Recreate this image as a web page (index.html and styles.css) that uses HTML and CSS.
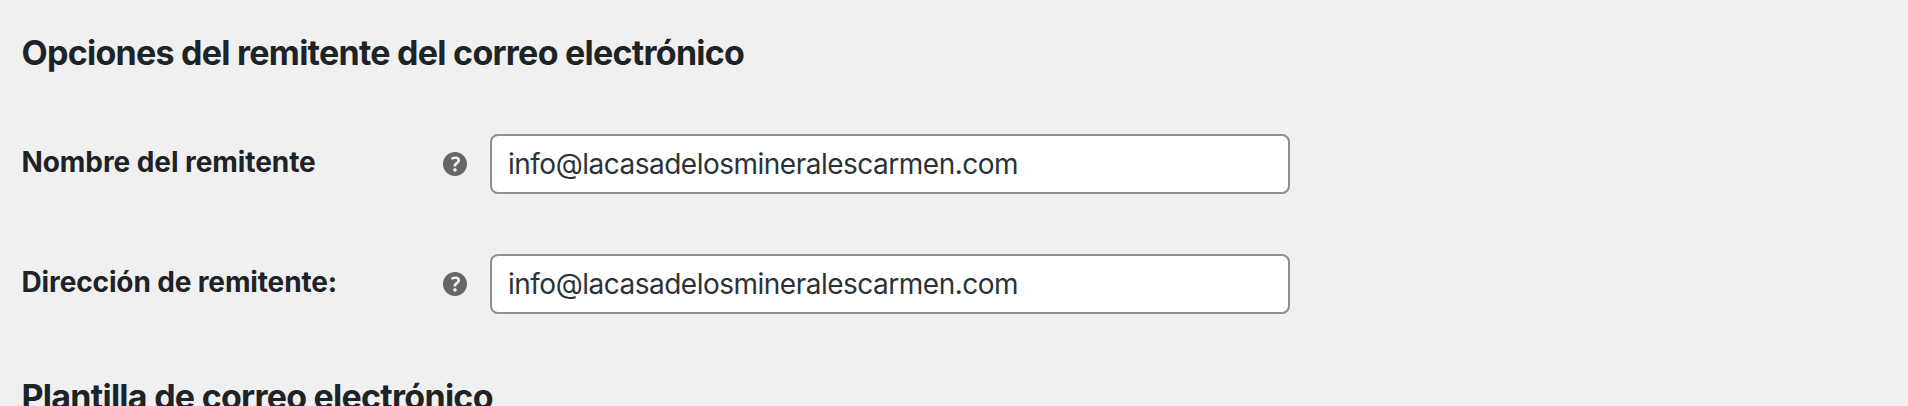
FILE: index.html
```html
<!DOCTYPE html>
<html lang="es">
<head>
<meta charset="utf-8">
<title>Opciones de correo electrónico</title>
<link rel="stylesheet" href="styles.css">
</head>
<body>
<main class="settings">
<h2 class="title">Opciones del remitente del correo electrónico</h2>
<div class="row">
<label class="label label-name" for="name">Nombre del remitente</label>
<svg class="help" viewBox="3 3 14 14"><path fill="#666" d="M17 10c0-3.87-3.14-7-7-7-3.87 0-7 3.13-7 7s3.13 7 7 7c3.86 0 7-3.13 7-7zm-6.3 1.48H9.14v-.43c0-.38.08-.7.24-.98s.46-.57.88-.89c.41-.29.68-.53.81-.71.14-.18.2-.39.2-.62 0-.25-.09-.44-.28-.58-.19-.13-.45-.19-.79-.19-.58 0-1.25.19-2 .57l-.64-1.28c.87-.49 1.8-.74 2.77-.74.81 0 1.45.2 1.92.58.48.39.71.91.71 1.55 0 .43-.09.8-.29 1.11-.19.32-.57.67-1.11 1.06-.38.28-.61.49-.71.63-.1.15-.15.34-.15.57v.35zm-1.47 2.74c-.18-.17-.27-.42-.27-.73 0-.33.08-.58.26-.75s.43-.25.77-.25c.32 0 .57.09.75.26s.27.42.27.74c0 .3-.09.55-.27.72-.18.18-.43.27-.75.27-.33 0-.58-.09-.76-.26z"/></svg>
<input class="field" id="name" type="text" value="info@lacasadelosmineralescarmen.com">
</div>
<div class="row">
<label class="label" for="address">Dirección de remitente:</label>
<svg class="help" viewBox="3 3 14 14"><path fill="#666" d="M17 10c0-3.87-3.14-7-7-7-3.87 0-7 3.13-7 7s3.13 7 7 7c3.86 0 7-3.13 7-7zm-6.3 1.48H9.14v-.43c0-.38.08-.7.24-.98s.46-.57.88-.89c.41-.29.68-.53.81-.71.14-.18.2-.39.2-.62 0-.25-.09-.44-.28-.58-.19-.13-.45-.19-.79-.19-.58 0-1.25.19-2 .57l-.64-1.28c.87-.49 1.8-.74 2.77-.74.81 0 1.45.2 1.92.58.48.39.71.91.71 1.55 0 .43-.09.8-.29 1.11-.19.32-.57.67-1.11 1.06-.38.28-.61.49-.71.63-.1.15-.15.34-.15.57v.35zm-1.47 2.74c-.18-.17-.27-.42-.27-.73 0-.33.08-.58.26-.75s.43-.25.77-.25c.32 0 .57.09.75.26s.27.42.27.74c0 .3-.09.55-.27.72-.18.18-.43.27-.75.27-.33 0-.58-.09-.76-.26z"/></svg>
<input class="field" id="address" type="text" value="info@lacasadelosmineralescarmen.com">
</div>
<h2 class="title">Plantilla de correo electrónico</h2>
</main>
</body>
</html>
```
FILE: styles.css
```css
* { box-sizing: border-box; }
body { margin: 0; background: #f0f0f1; overflow: hidden; font-family: Inter, sans-serif; color: #1d2327; }
.settings { height: 406px; overflow: hidden; padding: 32px 21.5px 0; }
.title { margin: 0; font-size: 34px; line-height: 42px; font-weight: 650; letter-spacing: -0.74px; white-space: nowrap; }
.row { display: flex; align-items: center; height: 60px; margin-top: 60px; }
.label { width: 421.5px; font-size: 28px; line-height: 36px; font-weight: 650; letter-spacing: -0.13px; padding-bottom: 4px; }
.label-name { letter-spacing: -0.07px; }
.help { width: 24px; height: 24px; margin-right: 23px; flex: none; }
.field { width: 800px; height: 60px; border: 2px solid #8e8f94; border-radius: 8px; background: #fff; padding: 0 16px; font: 400 28px/56px Inter, sans-serif; letter-spacing: -0.5px; color: #2c3338; }
.row + .title { margin-top: 62px; }
```
